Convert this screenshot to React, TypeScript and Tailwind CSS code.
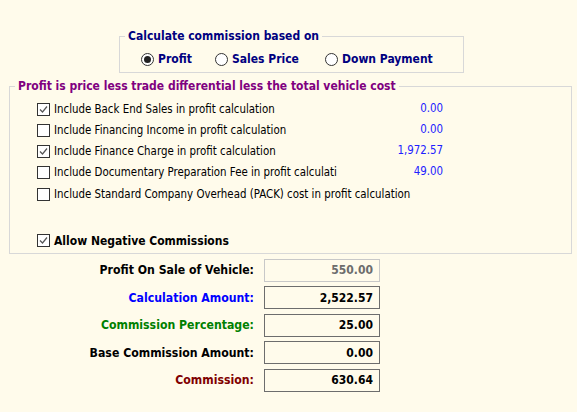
import React from "react";

const FONT = "font-['DejaVu_Sans_Condensed','DejaVu_Sans',sans-serif]";

function Check({ checked }: { checked?: boolean }) {
  return (
    <span className="w-[13px] h-[13px] border border-[#333] bg-white flex items-center justify-center shrink-0">
      {checked && (
        <svg width="9" height="9" viewBox="0 0 9 9">
          <path d="M1 4.5 L3.5 7 L8 1.5" stroke="#555" strokeWidth="1.2" fill="none" />
        </svg>
      )}
    </span>
  );
}

function Radio({ checked }: { checked?: boolean }) {
  return (
    <span className="w-[13px] h-[13px] rounded-full border border-[#333] bg-white flex items-center justify-center shrink-0">
      {checked && <span className="w-[7px] h-[7px] rounded-full bg-[#222]" />}
    </span>
  );
}

const options = [
  { label: "Include Back End Sales in profit calculation", value: "0.00", checked: true },
  { label: "Include Financing Income in profit calculation", value: "0.00" },
  { label: "Include Finance Charge in profit calculation", value: "1,972.57", checked: true },
  { label: "Include Documentary Preparation Fee in profit calculati", value: "49.00" },
  { label: "Include Standard Company Overhead (PACK) cost in profit calculation", wide: true },
];

const totals = [
  { label: "Profit On Sale of Vehicle:", value: "550.00", color: "text-black", readOnly: true },
  { label: "Calculation Amount:", value: "2,522.57", color: "text-[#0000ff]" },
  { label: "Commission Percentage:", value: "25.00", color: "text-[#008000]" },
  { label: "Base Commission Amount:", value: "0.00", color: "text-black" },
  { label: "Commission:", value: "630.64", color: "text-[#800000]" },
];

export default function App() {
  return (
    <div className={`w-[577px] h-[412px] bg-[#fffbeb] overflow-hidden flex flex-col ${FONT}`}>
      {/* Commission basis */}
      <fieldset className="ml-[119px] mt-[28px] w-[345px] border border-[#d8d8d8] px-0 pt-[6px] pb-[6px]">
        <legend className="ml-[5px] px-[3px] leading-[16px] text-[12px] font-bold text-[#000080]">
          Calculate commission based on
        </legend>
        <div className="grid grid-cols-[74px_110px_auto] pl-[21px] h-[16px] items-center text-[12px] font-bold text-[#000080]">
          <label className="flex items-center gap-[4px]">
            <Radio checked />
            Profit
          </label>
          <label className="flex items-center gap-[4px]">
            <Radio />
            Sales Price
          </label>
          <label className="flex items-center gap-[4px]">
            <Radio />
            Down Payment
          </label>
        </div>
      </fieldset>

      {/* Profit calculation options */}
      <fieldset className="ml-[9px] mt-[5px] w-[563px] border border-[#d8d8d8] px-0 pt-[4.5px] pb-[3px]">
        <legend className="ml-[5px] px-[3px] leading-[16px] text-[12px] font-bold text-[#800080]">
          Profit is price less trade differential less the total vehicle cost
        </legend>
        <div className="flex flex-col pl-[27px]">
          {options.map((o) => (
            <div key={o.label} className="flex items-center h-[21.25px] text-[11.4px] text-black">
              <Check checked={o.checked} />
              <span className={`ml-[4px] whitespace-nowrap ${o.wide ? "" : "w-[285px]"}`}>
                {o.label}
              </span>
              {o.value && (
                <span className="w-[104px] text-right text-[#2020ff] pb-[2px]">{o.value}</span>
              )}
            </div>
          ))}
          <div className="flex items-center h-[18px] mt-[27px] text-[12px] font-bold text-black">
            <Check checked />
            <span className="ml-[4px]">Allow Negative Commissions</span>
          </div>
        </div>
      </fieldset>

      {/* Totals */}
      <div className="ml-[9px] mt-[5px] grid grid-cols-[245px_116px] gap-x-[10px] gap-y-[4.5px] items-center">
        {totals.map((t) => (
          <React.Fragment key={t.label}>
            <span className={`text-right text-[12.2px] font-bold ${t.color}`}>{t.label}</span>
            <div
              className={`h-[23px] border flex items-center justify-end pr-[6px] text-[12px] font-bold ${
                t.readOnly ? "border-[#c8c8c8] text-[#6d6d6d]" : "border-[#6d6d6d] text-black"
              }`}
            >
              {t.value}
            </div>
          </React.Fragment>
        ))}
      </div>
    </div>
  );
}
